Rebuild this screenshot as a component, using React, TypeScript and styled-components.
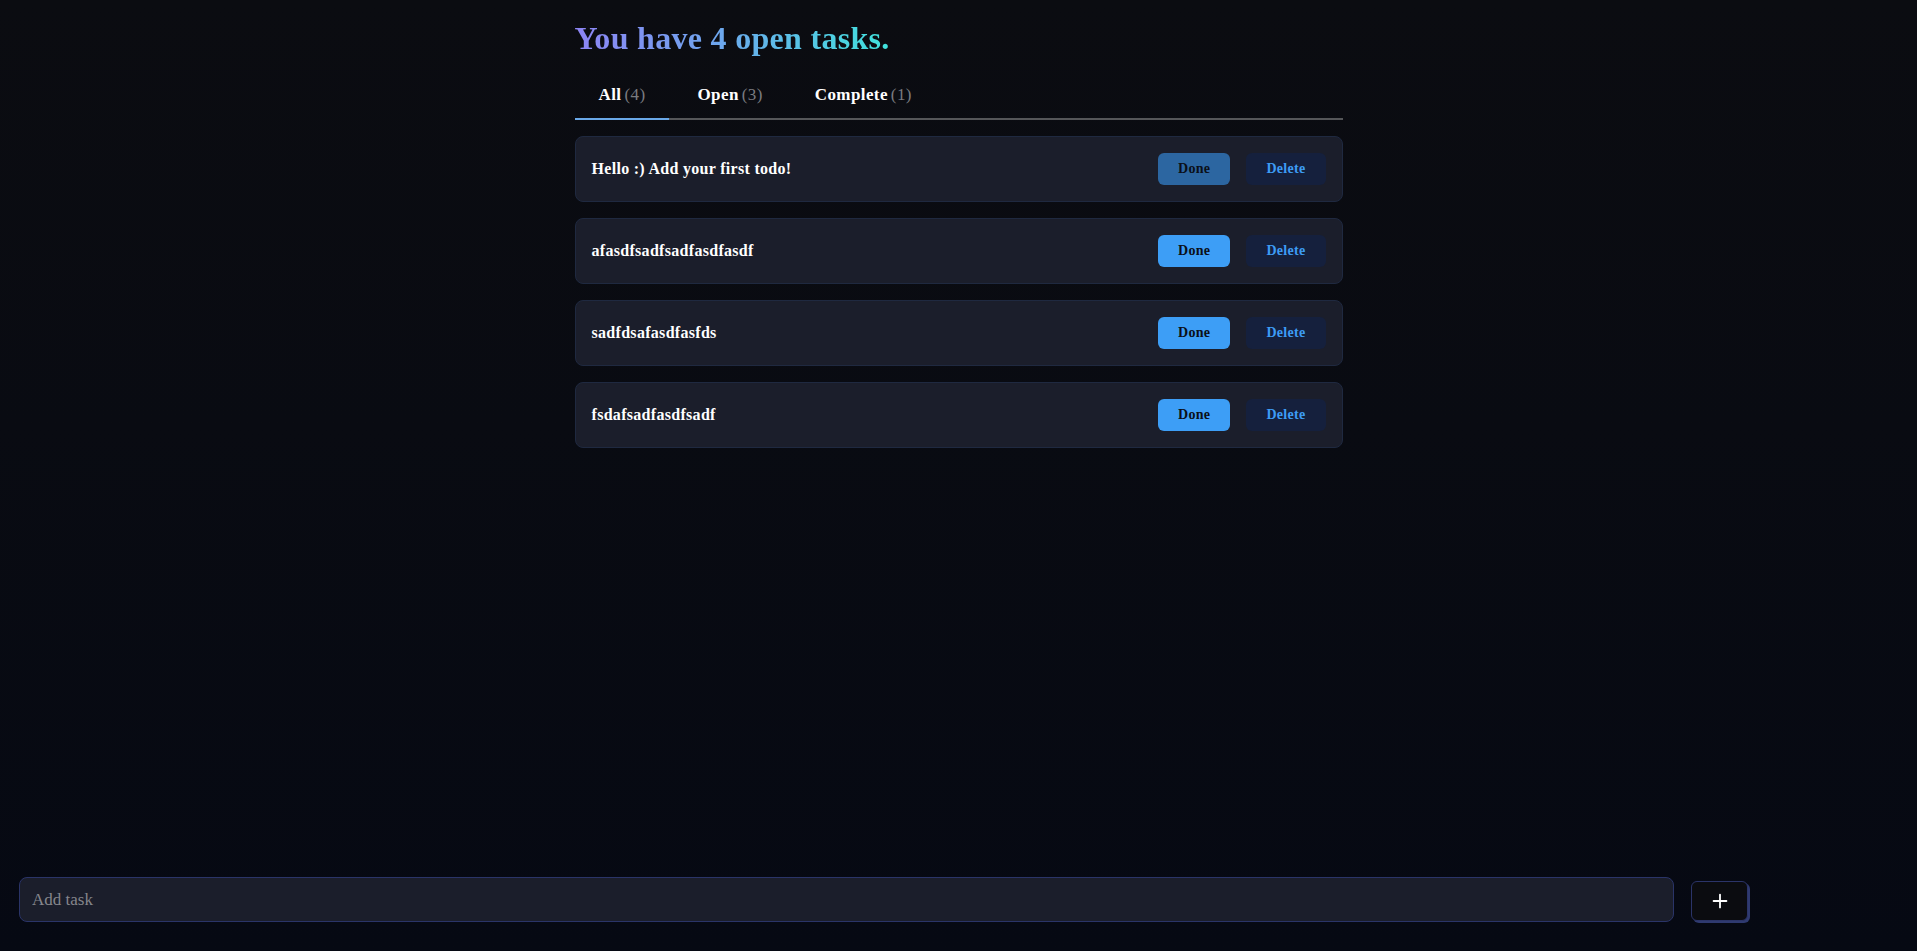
import React, { useState } from "react";
import styled, { createGlobalStyle } from "styled-components";
import { Plus } from "lucide-react";

const GlobalStyle = createGlobalStyle`
  html, body {
    margin: 0;
    padding: 0;
  }
  body {
    background: linear-gradient(180deg, #0b0c11 0%, #090b12 45%, #060913 100%);
    min-height: 100vh;
    font-family: "Liberation Serif", "DejaVu Serif", serif;
    color: #ffffff;
  }
  * {
    box-sizing: border-box;
  }
`;

const Page = styled.div`
  min-height: 100vh;
  display: flex;
  flex-direction: column;
`;

const Main = styled.main`
  flex: 1;
  width: 768px;
  margin: 0 auto;
  padding-top: 18px;
`;

const Title = styled.h1`
  margin: 0;
  font-size: 32px;
  line-height: 40px;
  font-weight: 700;
  letter-spacing: 0.3px;
  display: inline-block;
  background: linear-gradient(90deg, #8d84f4 0%, #6ea6ee 45%, #3fe3dc 100%);
  -webkit-background-clip: text;
  background-clip: text;
  color: transparent;
`;

const TabBar = styled.div`
  display: flex;
  gap: 4px;
  margin-top: 12px;
  border-bottom: 2px solid #555659;
`;

const Tab = styled.button<{ $active?: boolean }>`
  background: none;
  border: none;
  border-bottom: 2px solid ${(p) => (p.$active ? "#6aa8e8" : "transparent")};
  margin-bottom: -2px;
  padding: 15px 24px 13px;
  font-family: inherit;
  font-size: 17px;
  line-height: 20px;
  font-weight: 700;
  letter-spacing: 0.4px;
  color: #ffffff;
  cursor: pointer;
`;

const Count = styled.span`
  font-weight: 400;
  color: #7a7b80;
  margin-left: 3px;
`;

const List = styled.ul`
  list-style: none;
  margin: 16px 0 0;
  padding: 0;
  display: flex;
  flex-direction: column;
  gap: 16px;
`;

const Row = styled.li`
  height: 66px;
  display: flex;
  align-items: center;
  justify-content: space-between;
  padding: 0 16px;
  background: #1b1e2b;
  border: 1px solid #1f2940;
  border-radius: 8px;
`;

const TaskText = styled.span`
  font-size: 16px;
  font-weight: 700;
  letter-spacing: 0.3px;
  color: #ffffff;
`;

const Actions = styled.div`
  display: flex;
  gap: 16px;
`;

const ActionButton = styled.button<{ $variant: "done" | "delete"; $faded?: boolean }>`
  height: 32px;
  padding: 0 20px;
  border: none;
  border-radius: 6px;
  font-family: inherit;
  font-size: 14px;
  font-weight: 700;
  letter-spacing: 0.3px;
  cursor: pointer;
  background: ${(p) =>
    p.$variant === "done" ? (p.$faded ? "#2c66a1" : "#3d9ef6") : "#15203d"};
  color: ${(p) => (p.$variant === "done" ? "#0b0f18" : "#3d9cf4")};
`;

const Footer = styled.form`
  display: flex;
  align-items: center;
  gap: 17px;
  padding: 0 169px 29px 19px;
`;

const TaskInput = styled.input`
  flex: 1;
  height: 45px;
  padding: 0 12px;
  background: #1b1e2b;
  border: 1px solid #2a3468;
  border-radius: 8px;
  font-family: inherit;
  font-size: 17px;
  color: #ffffff;
  outline: none;

  &::placeholder {
    color: #85868c;
  }
`;

const AddButton = styled.button`
  width: 57px;
  height: 40px;
  display: flex;
  align-items: center;
  justify-content: center;
  background: #0b0c10;
  border: 1px solid #2b3468;
  border-radius: 6px;
  box-shadow: 2px 2px 0 #2f3a70;
  color: #ffffff;
  cursor: pointer;
  margin-top: 2px;
`;

type Task = { id: number; text: string; done: boolean };

const initialTasks: Task[] = [
  { id: 1, text: "Hello :) Add your first todo!", done: true },
  { id: 2, text: "afasdfsadfsadfasdfasdf", done: false },
  { id: 3, text: "sadfdsafasdfasfds", done: false },
  { id: 4, text: "fsdafsadfasdfsadf", done: false },
];

const App: React.FC = () => {
  const [tasks] = useState<Task[]>(initialTasks);
  const [tab, setTab] = useState("all");
  const [value, setValue] = useState("");

  const openCount = tasks.filter((t) => !t.done).length;
  const doneCount = tasks.length - openCount;

  const tabs = [
    { key: "all", label: "All", count: tasks.length },
    { key: "open", label: "Open", count: openCount },
    { key: "complete", label: "Complete", count: doneCount },
  ];

  return (
    <Page>
      <GlobalStyle />
      <Main>
        <Title>You have 4 open tasks.</Title>
        <TabBar>
          {tabs.map((t) => (
            <Tab key={t.key} $active={tab === t.key} onClick={() => setTab(t.key)}>
              {t.label}
              <Count>({t.count})</Count>
            </Tab>
          ))}
        </TabBar>
        <List>
          {tasks.map((task) => (
            <Row key={task.id}>
              <TaskText>{task.text}</TaskText>
              <Actions>
                <ActionButton $variant="done" $faded={task.done}>
                  Done
                </ActionButton>
                <ActionButton $variant="delete">Delete</ActionButton>
              </Actions>
            </Row>
          ))}
        </List>
      </Main>
      <Footer onSubmit={(e) => e.preventDefault()}>
        <TaskInput
          placeholder="Add task"
          value={value}
          onChange={(e) => setValue(e.target.value)}
        />
        <AddButton type="submit" aria-label="Add task">
          <Plus size={22} strokeWidth={2} />
        </AddButton>
      </Footer>
    </Page>
  );
};

export default App;
